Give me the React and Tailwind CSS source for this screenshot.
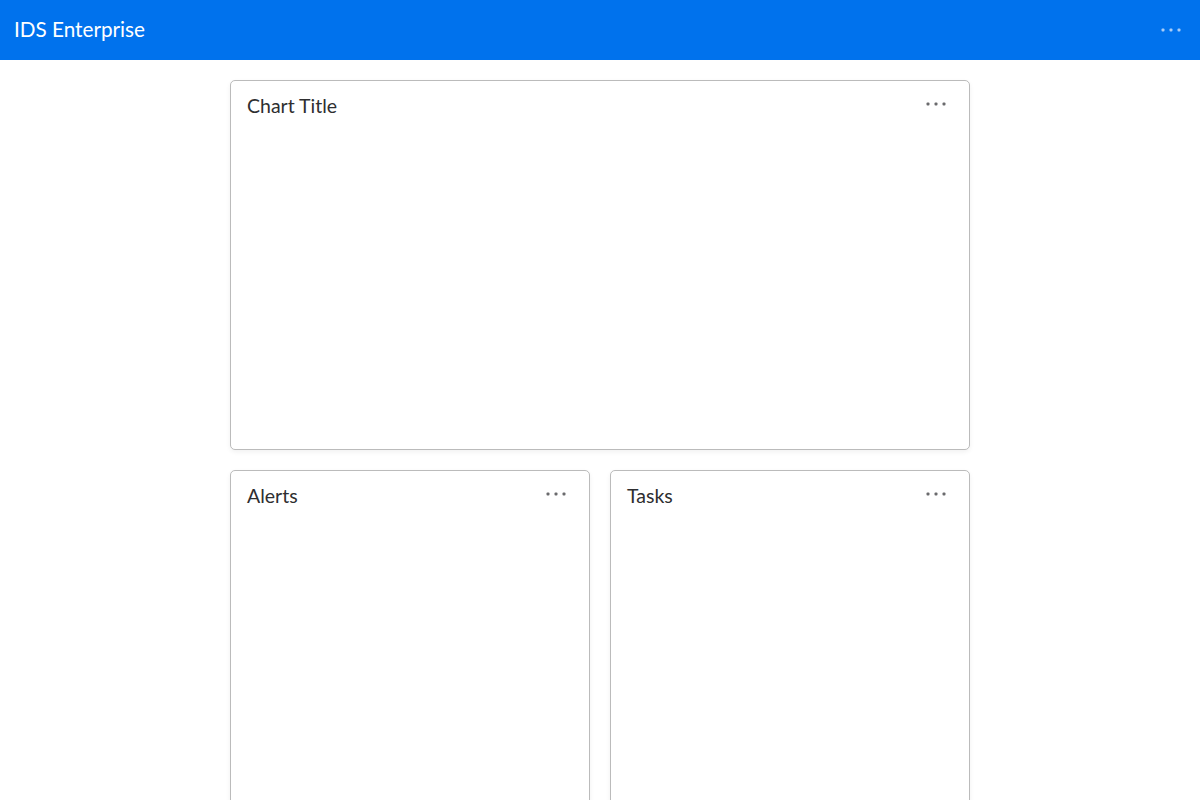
const Dots = ({ color }) => (
  <svg width="20" height="4" viewBox="0 0 20 4" className={color}>
    <rect x="0.5" y="0.5" width="3" height="3" rx="1" fill="currentColor" />
    <rect x="8.5" y="0.5" width="3" height="3" rx="1" fill="currentColor" />
    <rect x="16.5" y="0.5" width="3" height="3" rx="1" fill="currentColor" />
  </svg>
);

const Widget = ({ title, className }) => (
  <div className={`bg-white border border-[#bbbbbb] rounded-[5px] shadow-[0_2px_5px_rgba(0,0,0,0.06)] ${className}`}>
    <div className="flex items-center justify-between h-[50px] pl-4 pr-[23px]">
      <h2 className="text-[19.5px] text-[#2e2e30]">{title}</h2>
      <button className="-mt-[4px]">
        <Dots color="text-[#6a6a6d]" />
      </button>
    </div>
  </div>
);

export default function App() {
  return (
    <div className="h-[800px] bg-white font-['Lato',sans-serif] overflow-hidden">
      <header className="h-[60px] bg-[#0072ed] flex items-center justify-between pl-[14px] pr-[19px]">
        <h1 className="text-white text-[20.7px]">IDS Enterprise</h1>
        <button className="-mt-[1px]">
          <Dots color="text-[#a9cdf8]" />
        </button>
      </header>
      <main className="w-[740px] mx-auto pt-5 flex flex-col gap-5">
        <Widget title="Chart Title" className="h-[370px]" />
        <div className="grid grid-cols-2 gap-5">
          <Widget title="Alerts" className="h-[370px]" />
          <Widget title="Tasks" className="h-[370px]" />
        </div>
      </main>
    </div>
  );
}
